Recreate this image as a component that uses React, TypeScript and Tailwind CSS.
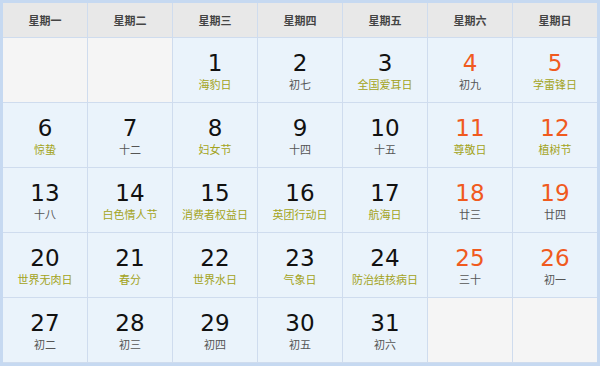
import React from "react";

type Cell = { d?: number; t?: string; fest?: boolean; red?: boolean };

const heads = ["星期一", "星期二", "星期三", "星期四", "星期五", "星期六", "星期日"];

const cells: Cell[] = [
  {}, {},
  { d: 1, t: "海豹日", fest: true },
  { d: 2, t: "初七" },
  { d: 3, t: "全国爱耳日", fest: true },
  { d: 4, t: "初九", red: true },
  { d: 5, t: "学雷锋日", fest: true, red: true },
  { d: 6, t: "惊蛰", fest: true },
  { d: 7, t: "十二" },
  { d: 8, t: "妇女节", fest: true },
  { d: 9, t: "十四" },
  { d: 10, t: "十五" },
  { d: 11, t: "尊敬日", fest: true, red: true },
  { d: 12, t: "植树节", fest: true, red: true },
  { d: 13, t: "十八" },
  { d: 14, t: "白色情人节", fest: true },
  { d: 15, t: "消费者权益日", fest: true },
  { d: 16, t: "英团行动日", fest: true },
  { d: 17, t: "航海日", fest: true },
  { d: 18, t: "廿三", red: true },
  { d: 19, t: "廿四", red: true },
  { d: 20, t: "世界无肉日", fest: true },
  { d: 21, t: "春分", fest: true },
  { d: 22, t: "世界水日", fest: true },
  { d: 23, t: "气象日", fest: true },
  { d: 24, t: "防治结核病日", fest: true },
  { d: 25, t: "三十", red: true },
  { d: 26, t: "初一", red: true },
  { d: 27, t: "初二" },
  { d: 28, t: "初三" },
  { d: 29, t: "初四" },
  { d: 30, t: "初五" },
  { d: 31, t: "初六" },
  {}, {},
];

export default function App() {
  return (
    <div className="w-[600px] h-[366px] bg-white">
      <div
        className="w-[600px] h-[366px] border-[3px] border-[#c6d9f1] bg-[#cfdcee] grid grid-cols-[repeat(7,84px)] grid-rows-[34px_repeat(5,64px)] gap-px"
        style={{ fontFamily: '"Noto Sans CJK SC", "Noto Sans", sans-serif' }}
      >
        {heads.map((h) => (
          <div
            key={h}
            className="bg-[#e8e8e8] flex items-center justify-center text-[11px] font-bold text-[#444]"
          >
            {h}
          </div>
        ))}
        {cells.map((c, i) =>
          c.d === undefined ? (
            <div key={i} className="bg-[#f5f5f5]" />
          ) : (
            <div key={i} className="bg-[#eaf3fb] flex flex-col items-center pt-[13px]">
              <div
                className={`text-[23px] leading-[24px] ${c.red ? "text-[#f05a1e]" : "text-[#111]"}`}
                style={{ fontFamily: '"DejaVu Sans", Verdana, sans-serif' }}
              >
                {c.d}
              </div>
              <div
                className={`text-[11px] leading-[14px] mt-[2px] ${c.fest ? "text-[#a3a321]" : "text-[#555]"}`}
              >
                {c.t}
              </div>
            </div>
          )
        )}
      </div>
    </div>
  );
}
